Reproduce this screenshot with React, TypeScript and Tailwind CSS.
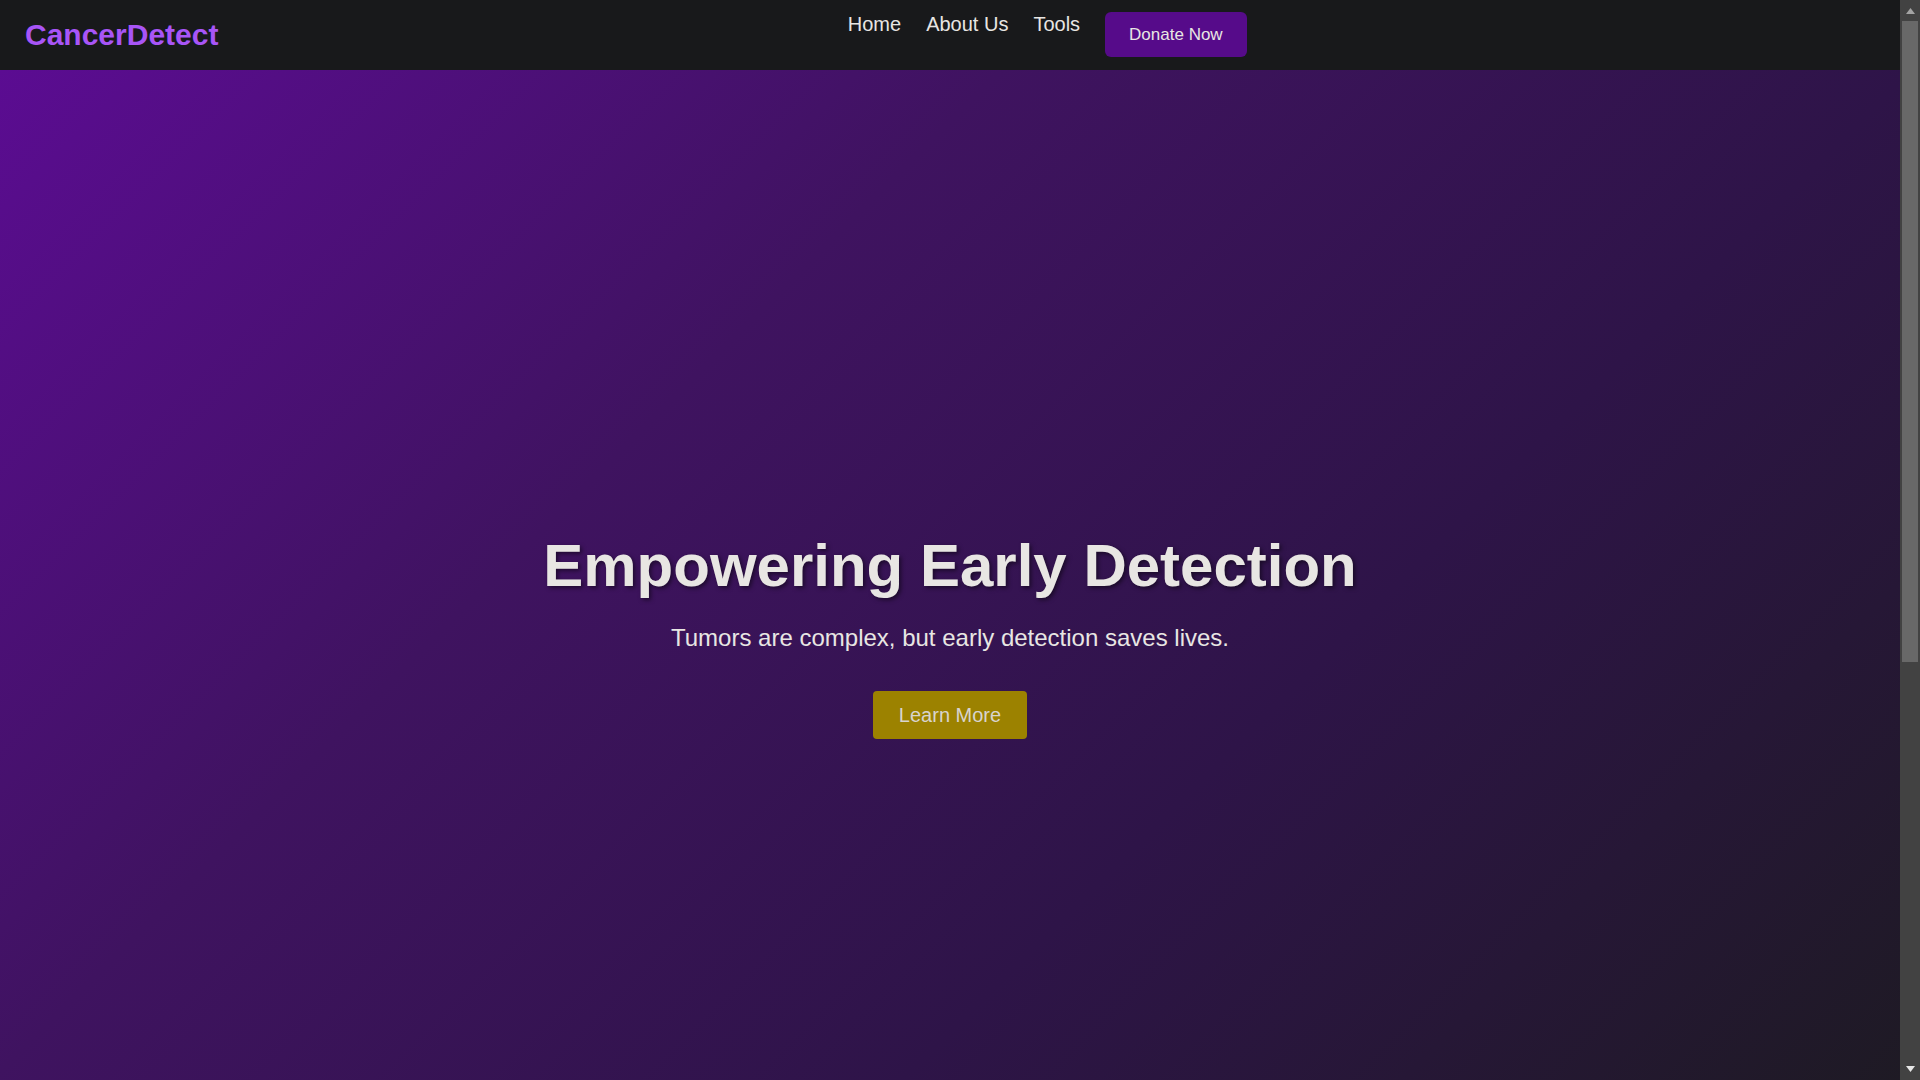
const navLinks = ['Home', 'About Us', 'Tools'];

const Header = () => {
  return (
    <header className="flex h-[70px] items-center justify-between bg-[#18191b] pl-[25px] pr-6">
      <a href="#" className="text-3xl font-bold text-[#a855f7]">
        CancerDetect
      </a>

      <nav className="flex items-start gap-[25px] self-start pt-[10px]">
        {navLinks.map((link) => (
          <a key={link} href="#" className="text-xl text-[#e8e6e3]">
            {link}
          </a>
        ))}
        <button className="mt-[2px] flex h-[45px] items-center rounded-md bg-[#560b8a] px-6 text-[17px] text-[#e8e6e3]">
          Donate Now
        </button>
      </nav>

      <div />
    </header>
  );
};

const Hero = () => {
  return (
    <section className="flex h-[1135px] flex-col items-center justify-center bg-[linear-gradient(135deg,#5b0c92_0%,#3f1360_33%,#2e1448_63%,#1e1a24_96%,#1c1a1f_100%)] text-center">
      <h1 className="text-6xl font-bold text-[#e8e6e3] [text-shadow:2px_2px_4px_rgba(0,0,0,0.5)]">
        Empowering Early Detection
      </h1>
      <p className="mt-[26px] text-2xl text-[#e8e6e3]">
        Tumors are complex, but early detection saves lives.
      </p>
      <button className="mt-[37px] rounded bg-[#9c8200] px-[26px] py-2.5 text-xl text-[#d8d4cf]">
        Learn More
      </button>
    </section>
  );
};

const ScrollBar = () => {
  return (
    <aside className="flex h-screen w-5 flex-col bg-[#424242]">
      <div className="flex h-[21px] items-center justify-center">
        <svg width="9" height="6" viewBox="0 0 9 6">
          <path d="M4.5 0 L9 6 L0 6 Z" fill="#a3a3a3" />
        </svg>
      </div>
      <div className="mx-[2px] h-[641px] bg-[#686868]" />
      <div className="flex-1" />
      <div className="flex h-[21px] items-center justify-center pb-[2px]">
        <svg width="9" height="6" viewBox="0 0 9 6">
          <path d="M0 0 L9 0 L4.5 6 Z" fill="#e6e6e6" />
        </svg>
      </div>
    </aside>
  );
};

export default function App() {
  return (
    <div className="flex h-screen overflow-hidden bg-[#1c1a1f] font-['Liberation_Sans',Arial,sans-serif]">
      <main className="h-full flex-1 overflow-y-auto">
        <Header />
        <Hero />
        <section className="h-[557px] bg-[#1c1a1f]" />
      </main>
      <ScrollBar />
    </div>
  );
}
